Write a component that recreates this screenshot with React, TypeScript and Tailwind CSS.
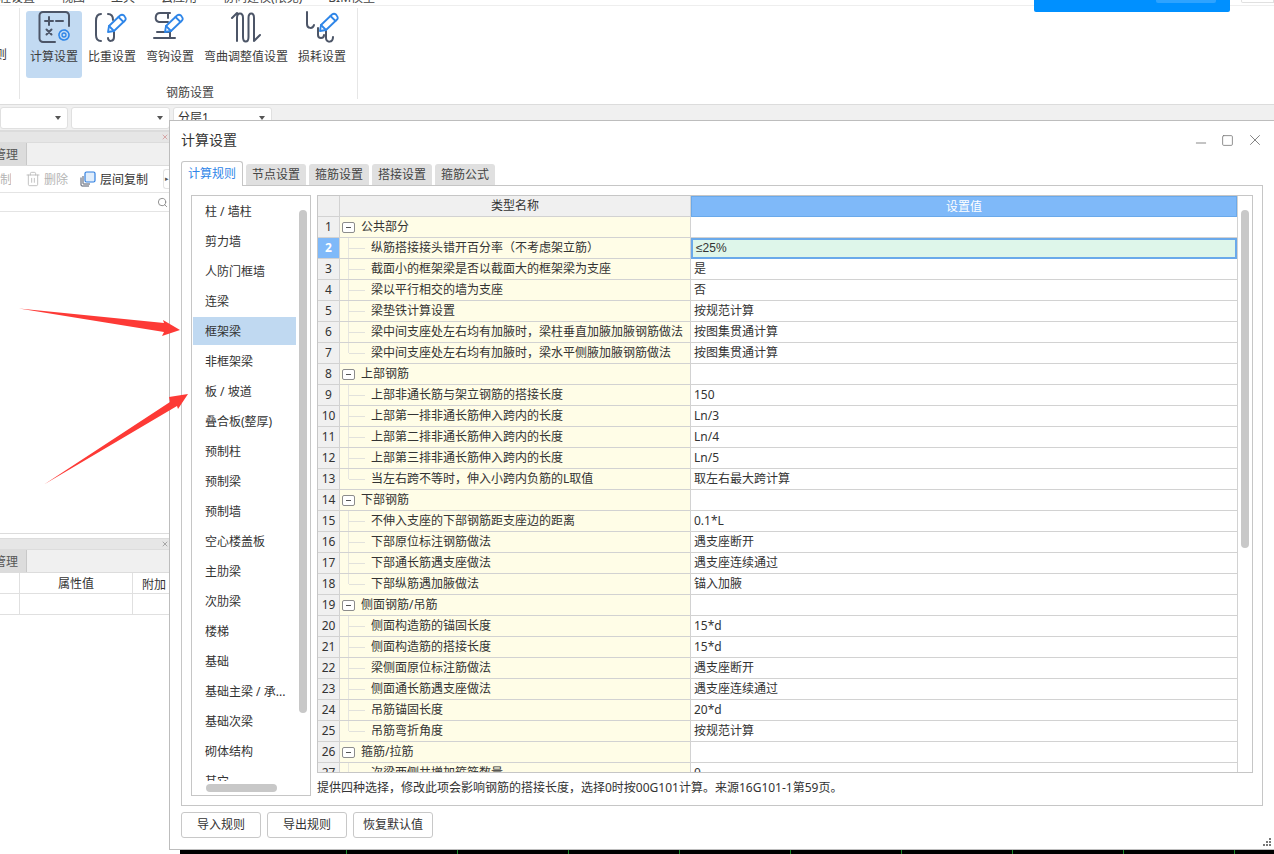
import { Minus, Square, X, Search, Trash2 } from 'lucide-react';

type Row = { group?: boolean; name: string; value?: string };

const rows: Row[] = [
  { group: true, name: '公共部分' },
  { name: '纵筋搭接接头错开百分率（不考虑架立筋）', value: '≤25%' },
  { name: '截面小的框架梁是否以截面大的框架梁为支座', value: '是' },
  { name: '梁以平行相交的墙为支座', value: '否' },
  { name: '梁垫铁计算设置', value: '按规范计算' },
  { name: '梁中间支座处左右均有加腋时，梁柱垂直加腋加腋钢筋做法', value: '按图集贯通计算' },
  { name: '梁中间支座处左右均有加腋时，梁水平侧腋加腋钢筋做法', value: '按图集贯通计算' },
  { group: true, name: '上部钢筋' },
  { name: '上部非通长筋与架立钢筋的搭接长度', value: '150' },
  { name: '上部第一排非通长筋伸入跨内的长度', value: 'Ln/3' },
  { name: '上部第二排非通长筋伸入跨内的长度', value: 'Ln/4' },
  { name: '上部第三排非通长筋伸入跨内的长度', value: 'Ln/5' },
  { name: '当左右跨不等时，伸入小跨内负筋的L取值', value: '取左右最大跨计算' },
  { group: true, name: '下部钢筋' },
  { name: '不伸入支座的下部钢筋距支座边的距离', value: '0.1*L' },
  { name: '下部原位标注钢筋做法', value: '遇支座断开' },
  { name: '下部通长筋遇支座做法', value: '遇支座连续通过' },
  { name: '下部纵筋遇加腋做法', value: '锚入加腋' },
  { group: true, name: '侧面钢筋/吊筋' },
  { name: '侧面构造筋的锚固长度', value: '15*d' },
  { name: '侧面构造筋的搭接长度', value: '15*d' },
  { name: '梁侧面原位标注筋做法', value: '遇支座断开' },
  { name: '侧面通长筋遇支座做法', value: '遇支座连续通过' },
  { name: '吊筋锚固长度', value: '20*d' },
  { name: '吊筋弯折角度', value: '按规范计算' },
  { group: true, name: '箍筋/拉筋' },
  { name: '次梁两侧共增加箍筋数量', value: '0' },
];

const categories = ['柱 / 墙柱', '剪力墙', '人防门框墙', '连梁', '框架梁', '非框架梁', '板 / 坡道', '叠合板(整厚)', '预制柱', '预制梁', '预制墙', '空心楼盖板', '主肋梁', '次肋梁', '楼梯', '基础', '基础主梁 / 承...', '基础次梁', '砌体结构', '其它'];

const menus = ['工程设置', '视图', '工具', '云应用', '协同建模(限免)', 'BIM模型'];
const ticks = [346, 457, 568, 679, 790, 901, 1012, 1123, 1234];

function Pencil({ x, y }: { x: number; y: number }) {
  return (
    <g transform={`translate(${x} ${y})`} stroke="#2f86e8" strokeWidth="1.8" fill="#fff" strokeLinejoin="round">
      <path d="M0 18 L1 12 L12 1.5 Q14 0 16 1.5 L17 3 Q18.500 5 17 6.500 L6 17 Z" />
      <path d="M10.500 3 L15.500 8 M1 12 L6 17" />
    </g>
  );
}

function RebarIcon({ kind }: { kind: number }) {
  return (
    <svg width="34" height="34" viewBox="0 0 34 34" fill="none" strokeWidth="2" stroke="#4c5567" strokeLinecap="round">
      {kind === 0 && (
        <>
          <path d="M6 3C1.500 3 1 7 1 10V24C1 28 2.500 30 6 30" />
          <path d="M13 3C17 3 18 6 18 9" />
          <path d="M19 21V26C19 31 13 31 13 27" />
          <Pencil x={13} y={3} />
        </>
      )}
      {kind === 1 && (
        <>
          <path d="M17 2H7C2 2 1 10 6 11H15M15 2V7" />
          <path d="M4 21H16M17 21V27M1 27H22" />
          <Pencil x={12} y={3} />
        </>
      )}
      {kind === 2 && (
        <path d="M8 30V7C8 1 14 1 14 7V26C14 32 19.500 32 19.500 26V7C19.500 1 25 1 25 7V30M25 30L31 24M8 2L3 7" />
      )}
      {kind === 3 && (
        <>
          <path d="M2 1V13C2 18 8 18 9 14" />
          <path d="M13 17V24C13 28 19 28 19 24" />
          <path d="M21 20V27C21 32 28 32 28 26" />
          <Pencil x={15} y={2} />
        </>
      )}
    </svg>
  );
}

function CalcIcon() {
  return (
    <svg width="34" height="34" viewBox="0 0 34 34" fill="none" strokeWidth="2" stroke="#4c5567" strokeLinecap="round">
      <path d="M18 31H6a3.500 3.500 0 0 1-3.500-3.500V4.500A3.500 3.500 0 0 1 6 1h22.500A3.500 3.500 0 0 1 32 4.500V15" />
      <path d="M8 10h8M12 6v8M19 10h7M9.500 18.500l5 5M14.500 18.500l-5 5" />
      <circle cx="27" cy="24" r="5" stroke="#2f86e8" strokeWidth="1.600" strokeDasharray="2.600 1" />
      <circle cx="27" cy="24" r="2" stroke="#2f86e8" strokeWidth="1.300" />
    </svg>
  );
}

function LayerCopyIcon() {
  return (
    <svg width="16" height="16" viewBox="0 0 16 16" fill="none">
      <path d="M1 6.500V14a1 1 0 0 0 1 1h7" stroke="#4c5567" strokeWidth="1" />
      <path d="M3 5V12.500a.5.5 0 0 0 .5.5H10" stroke="#4c5567" strokeWidth="1" />
      <rect x="5" y="1" width="10" height="10" rx="1.500" fill="#e0edfb" stroke="#2f7fe0" strokeWidth="1.200" />
    </svg>
  );
}

function ToolButton({ label, active, icon, width }: { label: string; active?: boolean; icon: React.ReactNode; width: string }) {
  return (
    <div className={`flex h-[67px] flex-col items-center rounded-[3px] ${width} ${active ? 'bg-[#c2daf2]' : ''}`}>
      <div className="flex h-[34px] items-center justify-center">{icon}</div>
      <span className="mt-[3px] whitespace-nowrap text-[12px] leading-[18px] text-[#3c3c3c]">{label}</span>
    </div>
  );
}

function SelectBox({ width, label }: { width: string; label?: string }) {
  return (
    <div className={`flex h-[22px] items-center justify-between rounded-[3px] border border-[#e0e0e0] bg-white pl-1 pr-[6px] text-[12px] text-[#333] ${width}`}>
      <span>{label}</span>
      <span className="h-0 w-0 border-x-[3px] border-t-[4px] border-x-transparent border-t-[#555]" />
    </div>
  );
}

function PanelTab() {
  return (
    <div className="flex h-[23px] shrink-0 border-b border-[#dcdcdc] bg-[#f0f0f0]">
      <div className="flex w-[27px] items-center justify-end overflow-hidden whitespace-nowrap border-r border-[#c8c8c8] bg-[#dcdcdc] pr-[8px] pt-[2px] text-[#555]">管理</div>
    </div>
  );
}

function SidePanels() {
  return (
    <div className="flex w-[170px] flex-col bg-white text-[12px] text-[#333]">
      <div className="flex h-[12px] shrink-0 items-center justify-end border-y border-[#dcdcdc] bg-[#e6e6e6] pr-[1px] text-[#d49a9a]">
        <X className="h-[8px] w-[8px]" strokeWidth={2.500} />
      </div>
      <PanelTab />
      <div className="flex h-[27px] shrink-0 items-center border-b border-[#e4e4e4] text-[#b4b4b4]">
        <span className="w-[11px] overflow-hidden pt-[2px] text-right">制</span>
        <Trash2 className="ml-[14px] h-[16px] w-[16px]" strokeWidth={1.200} />
        <span className="ml-[3px] pt-[2px]">删除</span>
        <span className="ml-[12px]"><LayerCopyIcon /></span>
        <span className="ml-[4px] pt-[2px] text-[#333]">层间复制</span>
        <span className="ml-[15px] flex h-[20px] flex-1 items-center justify-center rounded-l-[3px] border border-r-0 border-[#e4e4e4] text-[7px] text-[#555]">▸</span>
      </div>
      <div className="flex h-[19px] shrink-0 items-center justify-end border-b border-[#e4e4e4] pr-[2px]">
        <Search className="h-[11px] w-[11px] text-[#888]" strokeWidth={2} />
      </div>
      <div className="h-[322px] shrink-0 border-b border-[#dcdcdc]" />
      <div className="mt-[4px] flex h-[12px] shrink-0 items-center justify-end border-y border-[#dcdcdc] bg-[#e6e6e6] pr-[1px] text-[#999]">
        <X className="h-[8px] w-[8px]" strokeWidth={2.500} />
      </div>
      <PanelTab />
      <div className="flex h-[21px] shrink-0 border-b border-[#e0e0e0]">
        <div className="w-[20px] border-r border-[#e0e0e0]" />
        <div className="flex w-[113px] items-center justify-center border-r border-[#e0e0e0] pt-[2px]">属性值</div>
        <div className="flex-1 pl-[9px] pt-[2px] leading-[20px]">附加</div>
      </div>
      <div className="flex h-[21px] shrink-0 border-b border-[#e0e0e0]">
        <div className="w-[20px] border-r border-[#e0e0e0]" />
        <div className="w-[113px] border-r border-[#e0e0e0]" />
      </div>
    </div>
  );
}

function GridRow({ index, row, last }: { index: number; row: Row; last: boolean }) {
  const selected = index === 2;
  return (
    <div className="flex h-[21px] shrink-0 text-[12px] leading-[20px] text-[#333]">
      <div className={`flex w-[22px] shrink-0 items-center justify-center border-b border-r border-[#d2d2d2] ${selected ? 'bg-[#7fb9f9] font-bold text-white' : 'bg-[#f0f0f0]'}`}>{index}</div>
      <div className="relative w-[351px] shrink-0 overflow-hidden whitespace-nowrap border-b border-r border-[#d2d2d2] bg-[#fffde7]">
        {row.group ? (
          <div className="flex h-full items-center pl-[2px]">
            <span className="flex h-[11px] w-[13px] items-center justify-center rounded-[2px] border border-[#8c8c8c] bg-white">
              <span className="h-px w-[5px] bg-[#555]" />
            </span>
            <span className="ml-[6px]">{row.name}</span>
          </div>
        ) : (
          <div className="flex h-full items-center pl-[9px]">
            <span className={`absolute left-[8px] top-0 w-px bg-[#e6e6e0] ${last ? 'h-[10px]' : 'h-[21px]'}`} />
            <span className="h-px w-[16px] bg-[#e2e2dc]" />
            <span className="ml-[6px]">{row.name}</span>
          </div>
        )}
      </div>
      <div className={`flex-1 whitespace-nowrap pl-[3px] ${selected ? "border-2 border-[#6aa9ea] bg-[#def6ea] font-['Liberation_Sans','Noto_Sans_CJK_SC',sans-serif] leading-[17px]" : 'border-b border-[#d2d2d2]'}`}>{row.value}</div>
    </div>
  );
}

function SettingsDialog() {
  return (
    <div className="absolute left-[169px] top-[120px] flex h-[730px] w-[1105px] flex-col border-b border-l border-t border-[#bdbdbd] bg-white pl-[11px] pr-[10px]">
      <div className="flex h-[40px] shrink-0 items-center justify-between">
        <span className="-mt-[3px] text-[14px] text-[#333]">计算设置</span>
        <div className="-mt-[2px] flex items-center gap-[12px] text-[#777]">
          <Minus className="mt-[6px] h-[16px] w-[16px]" strokeWidth={1.300} />
          <Square className="h-[13px] w-[13px]" strokeWidth={1.500} />
          <X className="h-[18px] w-[18px]" strokeWidth={1.200} />
        </div>
      </div>
      <div className="flex h-[24px] shrink-0 items-end gap-[3px] text-[12px]">
        <div className="relative z-10 -mb-px flex h-[25px] w-[62px] items-center justify-center rounded-t-[3px] border border-b-0 border-[#c6c6c6] bg-white text-[#2f86e8]">计算规则</div>
        {['节点设置', '箍筋设置', '搭接设置', '箍筋公式'].map(tab => (
          <div key={tab} className="flex h-[21px] w-[60px] items-center justify-center rounded-t-[3px] bg-[#e0e0e0] text-[#444]">{tab}</div>
        ))}
      </div>
      <div className="flex h-[621px] w-[1082px] shrink-0 gap-[6px] border border-[#c6c6c6] pl-[9px] pt-[9px]">
        <div className="relative h-[601px] w-[120px] shrink-0 border border-[#c6c6c6] text-[12px] text-[#333]">
          <div className="h-[585px] overflow-hidden pt-[1px]">
            {categories.map((name, i) => (
              <div key={name} className={`mb-[2px] ml-[1px] flex h-[28px] w-[103px] items-center whitespace-nowrap pl-[12px] pt-[2px] ${i === 4 ? 'bg-[#c0d9f1]' : ''}`}>{name}</div>
            ))}
          </div>
          <div className="absolute left-[107px] top-[14px] h-[503px] w-[8px] rounded-[4px] bg-[#c8c8c8]" />
          <div className="absolute bottom-[3px] left-[14px] h-[8px] w-[71px] rounded-[4px] bg-[#c8c8c8]" />
        </div>
        <div className="flex w-[936px] shrink-0 flex-col">
          <div className="flex h-[578px] shrink-0 border border-[#c6c6c6]">
            <div className="flex w-[920px] shrink-0 flex-col overflow-hidden border-r border-[#d2d2d2]">
              <div className="flex h-[21px] shrink-0 text-[12px] leading-[20px] text-[#333]">
                <div className="w-[22px] shrink-0 border-b border-r border-[#d2d2d2] bg-[#f0f0f0]" />
                <div className="w-[351px] shrink-0 border-b border-r border-[#d2d2d2] bg-[#f0f0f0] text-center">类型名称</div>
                <div className="flex-1 border border-[#6aa9ea] bg-[#7fb9f9] text-center text-white">设置值</div>
              </div>
              {rows.map((row, i) => (
                <GridRow key={i} index={i + 1} row={row} last={!row.group && !!rows[i + 1]?.group} />
              ))}
            </div>
            <div className="relative flex-1">
              <div className="absolute left-[3px] top-[14px] h-[338px] w-[8px] rounded-[4px] bg-[#c8c8c8]" />
            </div>
          </div>
          <div className="whitespace-nowrap pt-[6px] text-[12px] leading-[18px] text-[#333]">提供四种选择，修改此项会影响钢筋的搭接长度，选择0时按00G101计算。来源16G101-1第59页。</div>
        </div>
      </div>
      <div className="mt-[6px] flex gap-[6px] text-[12px] text-[#333]">
        {['导入规则', '导出规则', '恢复默认值'].map(label => (
          <div key={label} className="flex h-[26px] w-[80px] items-center justify-center rounded-[3px] border border-[#c8c8c8]">{label}</div>
        ))}
      </div>
      <div className="absolute bottom-[3px] right-[3px] grid grid-cols-3 gap-px">
        {[0, 0, 1, 0, 1, 1, 1, 1, 1].map((on, i) => (
          <span key={i} className={`h-[2px] w-[2px] ${on ? 'bg-[#777]' : ''}`} />
        ))}
      </div>
    </div>
  );
}

export default function App() {
  return (
    <div className="relative h-[854px] w-[1274px] overflow-hidden bg-white font-['Noto_Sans','Noto_Sans_CJK_SC',sans-serif]">
      <div className="h-[6px] overflow-hidden border-b border-[#eeeeee]">
        <div className="-mt-[9px] flex h-[14px] gap-[26px] text-[12px] leading-[14px] text-[#444]">
          <span className="-ml-[13px]">{menus[0]}</span>
          {menus.slice(1).map(menu => (
            <span key={menu} className="whitespace-nowrap">{menu}</span>
          ))}
        </div>
      </div>

      <div className="relative flex h-[98px] items-start pt-[2px]">
        <div className="h-[91px] w-[20px] border-r border-[#e6e6e6] pt-[38px] text-[12px] leading-[18px] text-[#3c3c3c]">
          <span className="-ml-[5px] block">则</span>
        </div>
        <div className="flex h-[91px] w-[338px] flex-col border-r border-[#e6e6e6] pl-[6px] pt-[3px]">
          <div className="flex">
            <ToolButton label="计算设置" active width="mr-[1px] w-[56px]" icon={<CalcIcon />} />
            <ToolButton label="比重设置" width="w-[58px]" icon={<RebarIcon kind={0} />} />
            <ToolButton label="弯钩设置" width="w-[58px]" icon={<RebarIcon kind={1} />} />
            <ToolButton label="弯曲调整值设置" width="w-[94px]" icon={<RebarIcon kind={2} />} />
            <ToolButton label="损耗设置" width="w-[58px]" icon={<RebarIcon kind={3} />} />
          </div>
          <div className="ml-[140px] mt-[7px] text-[12px] leading-[16px] text-[#444]">钢筋设置</div>
        </div>
        <div className="absolute left-[1034px] top-[-6px] h-[12px] w-[196px] rounded-b-[2px] bg-[#0090ff]">
          <div className="absolute left-[122px] top-0 h-[3px] w-[60px] rounded-b-[2px] bg-[#2ea3ff]" />
        </div>
        <div className="absolute left-[1241px] top-[-6px] h-[3px] w-[33px] rounded-bl-[2px] border border-t-0 border-[#e0e0e0]" />
      </div>

      <div className="flex h-[27px] items-start gap-[3px] border-y border-[#dcdcdc] bg-[#f0f0f0] pt-[2px]">
        <SelectBox width="w-[68px]" />
        <SelectBox width="w-[99px]" />
        <SelectBox width="w-[99px]" label="分层1" />
      </div>

      <SidePanels />
      <SettingsDialog />

      <svg className="absolute left-0 top-0" width="200" height="520" viewBox="0 0 200 520" fill="#fd3a36">
        <path d="M19 308.500 L164 323 L163 320 L180 330 L162 336 L164 332 Z" />
        <path d="M44 484.500 L170 402 L169 397 L188 394 L178 409 L177 406 Z" />
      </svg>

      <div className="absolute bottom-0 left-[180px] flex h-[4px] w-[1094px] bg-black">
        {ticks.map(x => (
          <span key={x} className="absolute top-0 h-full w-px bg-[#1c8a2a]" style={{ left: x - 180 }} />
        ))}
      </div>
    </div>
  );
}
